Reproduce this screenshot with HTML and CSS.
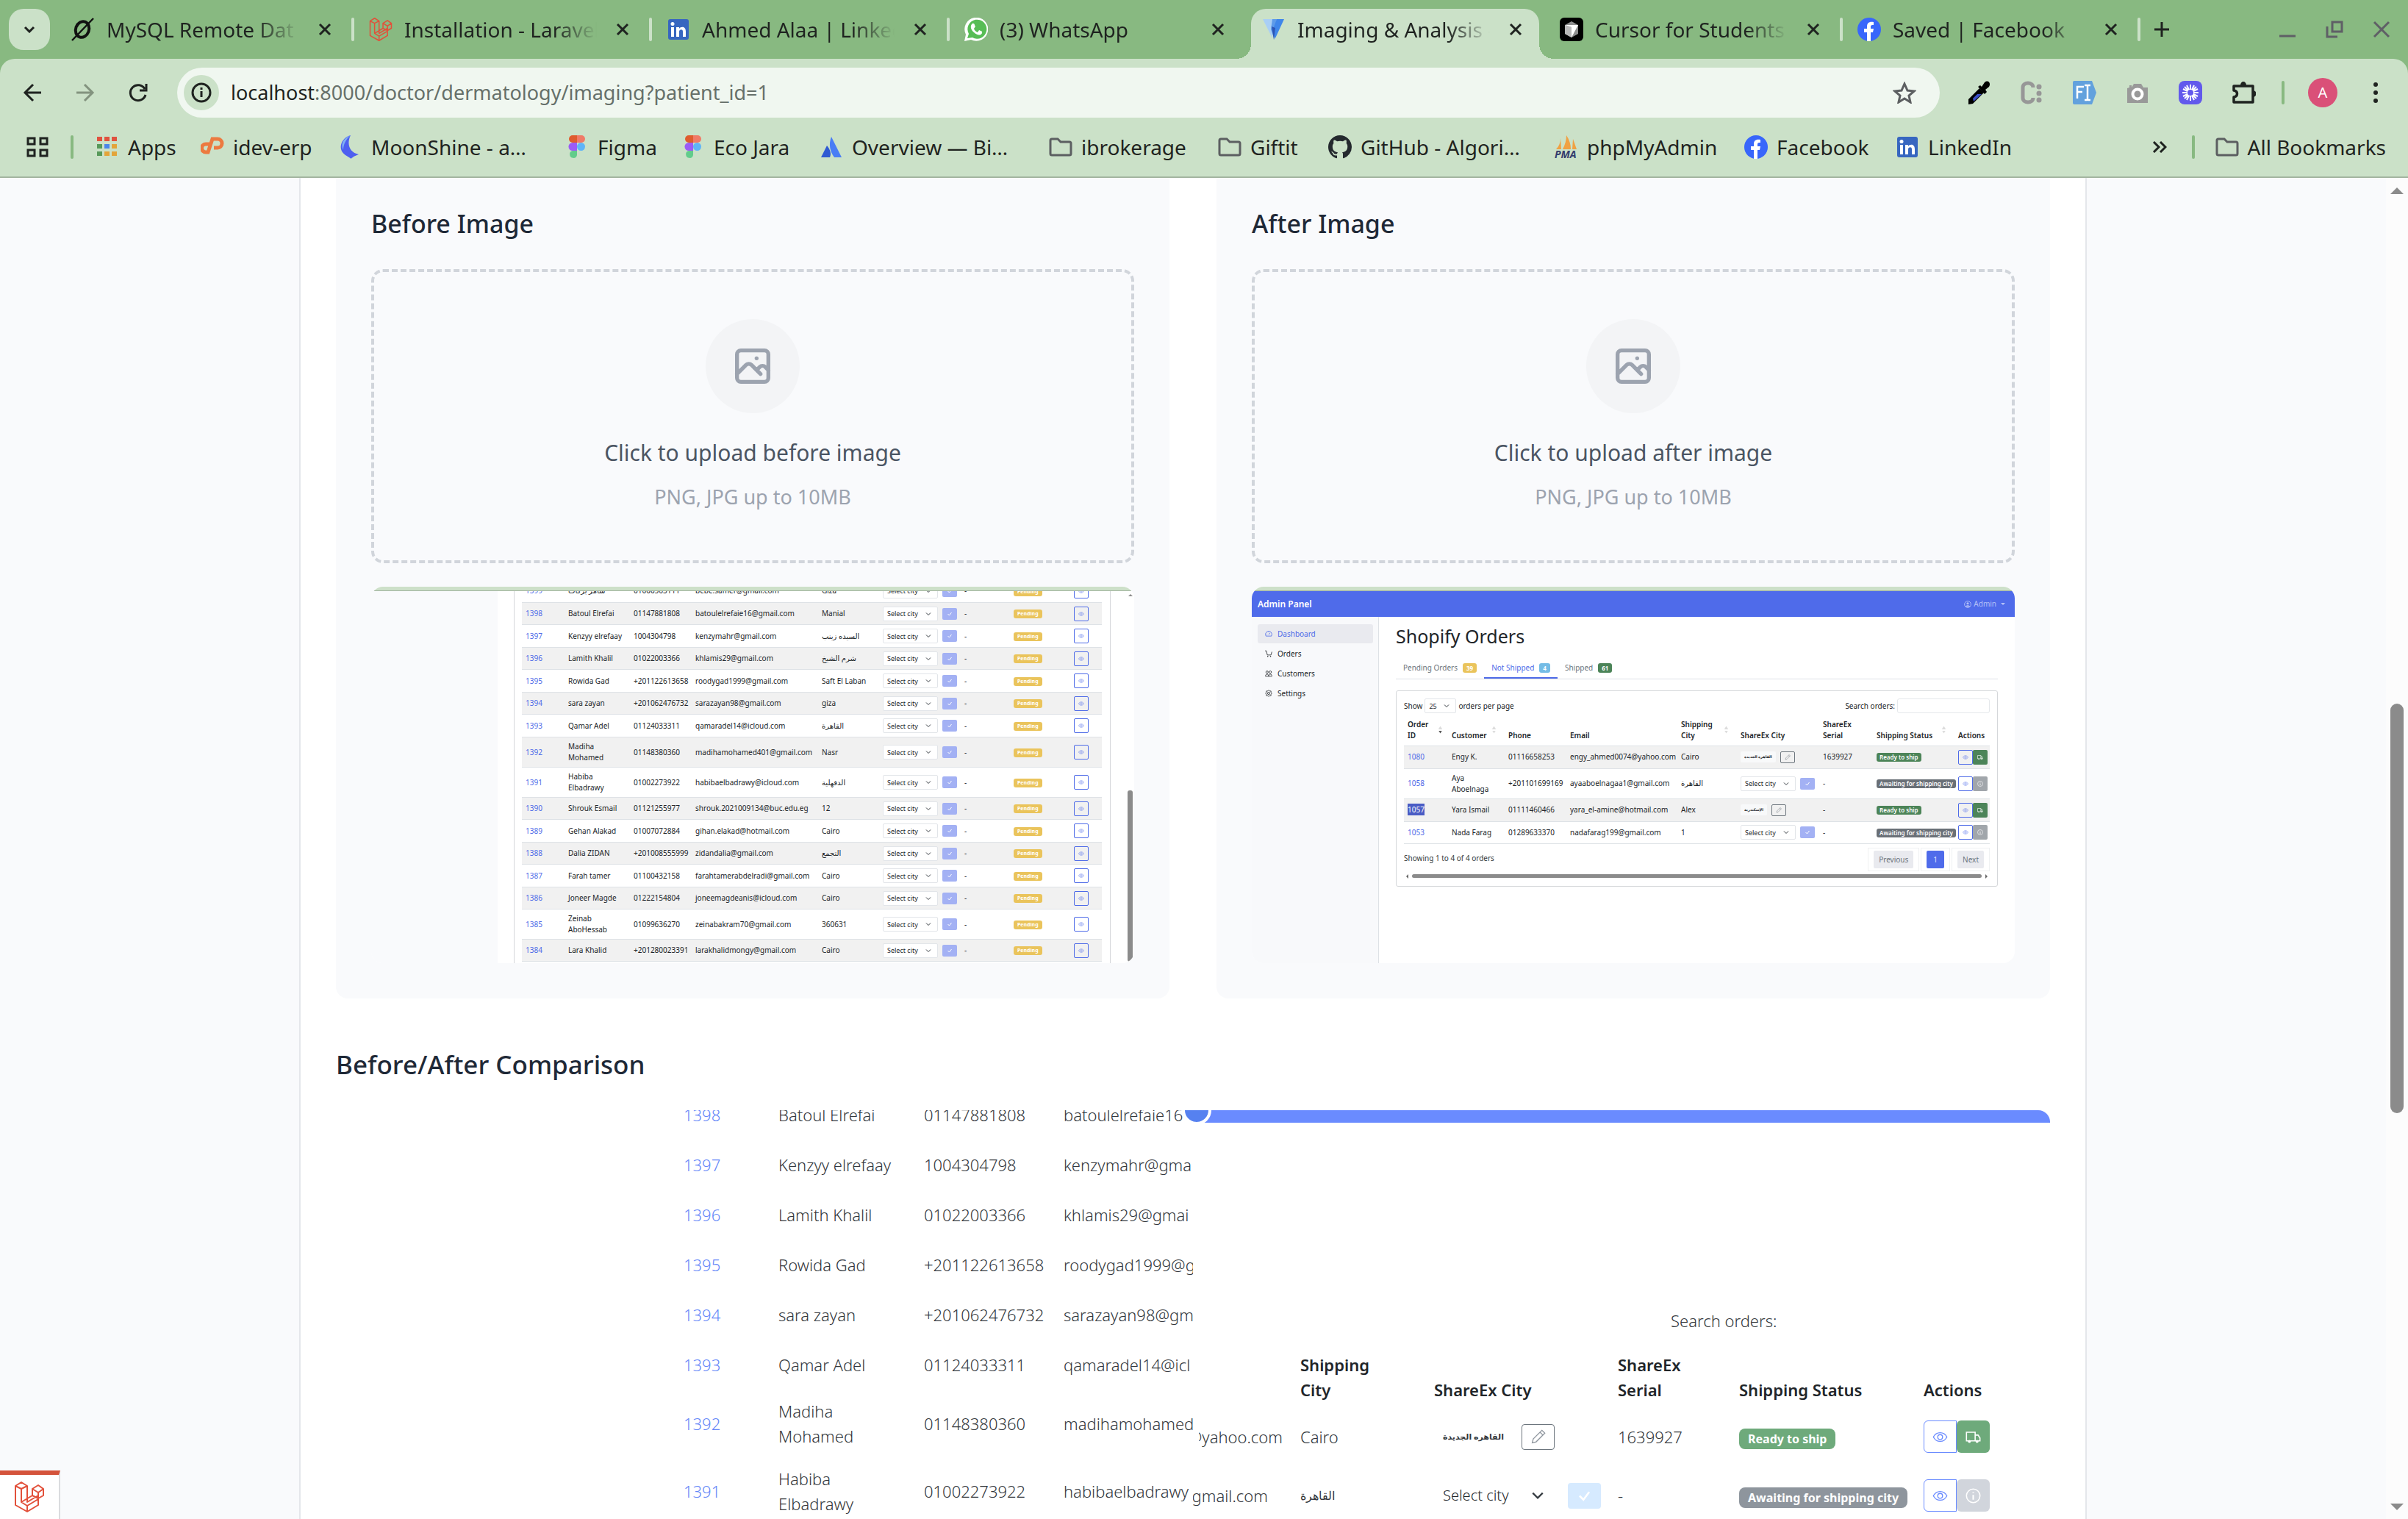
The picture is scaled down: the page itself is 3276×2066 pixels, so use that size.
FILE: index.html
```html
<!DOCTYPE html>
<html lang="en">
<head>
<meta charset="utf-8">
<title>Imaging &amp; Analysis</title>
<link rel="stylesheet" href="styles.css">
</head>
<body>
<svg class="sprite" aria-hidden="true">
  <symbol id="x" viewBox="0 0 18 18"><path d="M2 2l14 14M16 2L2 16" stroke="currentColor" stroke-width="3" fill="none"/></symbol>
  <symbol id="laravel" viewBox="0 0 40 42"><path d="M1 6l8-5 8 5v22l15-9v-4l-8-5V10l8-5 7 5v9l-7 4v9L17 41 1 32zM1 6l8 4 8-4M9 10v18l8 5 15-9M17 33v8M9 28l15-9v-9l8 5 7-5M32 15v8M24 19l8 4" fill="none" stroke="#e2503a" stroke-width="2" stroke-linejoin="round"/></symbol>
  <symbol id="in" viewBox="0 0 32 32"><rect x="2" y="2" width="28" height="28" rx="3" fill="#3766c0"/><path d="M6 13h4v13H6zM13 13h4v2c2-3 9-4 9 4v7h-4v-7c0-4-5-3-5 0v7h-4z" fill="#fff"/><circle cx="8" cy="8.500" r="2.500" fill="#fff"/></symbol>
  <symbol id="fb" viewBox="0 0 32 32"><circle cx="16" cy="16" r="16" fill="#3866fb"/><path d="M13 32V20H9v-5h4v-3c0-5 3-7 9-6v4c-3 0-4 0-4 3v2h4l-1 5h-3v12z" fill="#fff"/></symbol>
  <symbol id="folder" viewBox="0 0 32 26"><path d="M2 4a2 2 0 012-2h8l4 4h12a2 2 0 012 2v14a2 2 0 01-2 2H4a2 2 0 01-2-2z" fill="none" stroke="#5c5f61" stroke-width="3"/></symbol>
  <symbol id="figma" viewBox="0 0 32 32"><path d="M10 0h6v10h-6a5 5 0 010-10z" fill="#df5c2f"/><path d="M16 0h6a5 5 0 010 10h-6z" fill="#f07a67"/><path d="M10 10h6v11h-6a5 5 0 010-11z" fill="#9b5cf5"/><circle cx="21.500" cy="15.500" r="5.500" fill="#5fb4f8"/><path d="M10 21h6v6a5 5 0 11-6-6z" fill="#62cc8b"/></symbol>
  <symbol id="image" viewBox="0 0 24 24"><path fill="none" stroke="#9ca3af" stroke-width="2" stroke-linecap="round" stroke-linejoin="round" d="M4 16l4.586-4.586a2 2 0 012.828 0L16 16m-2-2l1.586-1.586a2 2 0 012.828 0L20 14m-6-6h.01M6 20h12a2 2 0 002-2V6a2 2 0 00-2-2H6a2 2 0 00-2 2v12a2 2 0 002 2z"/></symbol>
  <symbol id="eye" viewBox="0 0 16 16"><path d="M1 8c3-6 11-6 14 0-3 6-11 6-14 0z" fill="none" stroke="currentColor"/><circle cx="8" cy="8" r="2.500" fill="none" stroke="currentColor"/></symbol>
  <symbol id="tick" viewBox="0 0 16 16"><path d="M3 8l4 4 6-8" fill="none" stroke="currentColor" stroke-width="2"/></symbol>
  <symbol id="truck" viewBox="0 0 16 16"><path d="M1 3h9v9H1zM10 6h3l2 3v3h-5z" fill="none" stroke="currentColor" stroke-width="1.200"/><circle cx="4" cy="12.500" r="1.500" fill="currentColor"/><circle cx="12" cy="12.500" r="1.500" fill="currentColor"/></symbol>
  <symbol id="info" viewBox="0 0 16 16"><circle cx="8" cy="8" r="7" fill="none" stroke="currentColor" stroke-width="1.200"/><path d="M8 7v5M8 4v1" stroke="currentColor" stroke-width="1.600"/></symbol>
  <symbol id="pencil" viewBox="0 0 16 16"><path d="M2 14l1-4 9-9 3 3-9 9zM10 3l3 3" fill="none" stroke="currentColor"/></symbol>
</svg>

<header class="chrome">
  <div class="tabstrip">
    <button class="tab-search" aria-label="Search tabs"><svg width="16" height="10" viewBox="0 0 16 10"><path d="M2 2l6 6 6-6" fill="none" stroke="#1f2320" stroke-width="3"/></svg></button>
    <nav class="tabs">
      <div class="tab"><svg class="fav" viewBox="0 0 32 32"><ellipse cx="15" cy="16" rx="9" ry="11" fill="none" stroke="#111" stroke-width="4" transform="rotate(20 15 16)"/><path d="M30 1L1 31" stroke="#111" stroke-width="2.500"/></svg><span class="tab-title">MySQL Remote Dat</span><button class="close" aria-label="Close tab"><svg><use href="#x"/></svg></button></div>
      <div class="tab"><svg class="fav"><use href="#laravel"/></svg><span class="tab-title">Installation - Laravel</span><button class="close" aria-label="Close tab"><svg><use href="#x"/></svg></button></div>
      <div class="tab"><svg class="fav"><use href="#in"/></svg><span class="tab-title">Ahmed Alaa | Linked</span><button class="close" aria-label="Close tab"><svg><use href="#x"/></svg></button></div>
      <div class="tab last"><svg class="fav" viewBox="0 0 32 32"><path d="M0 32l2-9a16 16 0 117 7z" fill="#fff"/><path d="M4 28l2-6a13 13 0 115 5z" fill="#57bd55"/><path d="M11 8c3-1 3 3 4 4l-2 3c1 3 3 4 5 5l2-3c2 1 5 1 4 4-2 4-7 3-11-1-4-3-6-9-2-12z" fill="#fff"/></svg><span class="tab-title">(3) WhatsApp</span><button class="close" aria-label="Close tab"><svg><use href="#x"/></svg></button></div>
      <div class="tab active"><svg class="fav" viewBox="0 0 32 32"><path d="M1 2h14l-1 26z" fill="#a9cff5"/><path d="M14 2h6l-3 28-5-14z" fill="#5d9bea"/><path d="M20 2h10L18 28l-4-10z" fill="#3f86ea"/><path d="M13 12l5 2-2 16z" fill="#2c55b5"/></svg><span class="tab-title">Imaging &amp; Analysis -</span><button class="close" aria-label="Close tab"><svg><use href="#x"/></svg></button></div>
      <div class="tab"><svg class="fav" viewBox="0 0 32 32"><rect width="32" height="32" rx="6" fill="#000"/><path d="M16 5l9 5v12l-9 5-9-5V10z" fill="#8d8d8d"/><path d="M7 10h18l-9 17V13z" fill="#fff"/><path d="M7 10l9 3v14l-9-5z" fill="#b9b9b9"/></svg><span class="tab-title">Cursor for Students</span><button class="close" aria-label="Close tab"><svg><use href="#x"/></svg></button></div>
      <div class="tab"><svg class="fav"><use href="#fb"/></svg><span class="tab-title">Saved | Facebook</span><button class="close" aria-label="Close tab"><svg><use href="#x"/></svg></button></div>
      <button class="new-tab" aria-label="New tab"><svg width="22" height="22" viewBox="0 0 22 22"><path d="M11 1v20M1 11h20" stroke="#1f2320" stroke-width="3"/></svg></button>
    </nav>
    <div class="window-buttons">
      <button aria-label="Minimise"><svg width="24" height="24" viewBox="0 0 24 24"><path d="M1 21h22" stroke="#5f5f66" stroke-width="3"/></svg></button>
      <button aria-label="Restore"><svg width="24" height="24" viewBox="0 0 24 24"><path d="M9 2h13v13H9zM2 8v14h14" fill="none" stroke="#5f5f66" stroke-width="3"/></svg></button>
      <button aria-label="Close window"><svg width="24" height="24" viewBox="0 0 24 24"><path d="M2 2l20 20M22 2L2 22" stroke="#5f5f66" stroke-width="3"/></svg></button>
    </div>
  </div>

  <div class="toolbar">
    <button class="tool" aria-label="Back"><svg width="26" height="26" viewBox="0 0 26 26"><path d="M25 13H3M14 2L3 13l11 11" fill="none" stroke="#1f2320" stroke-width="3"/></svg></button>
    <button class="tool" aria-label="Forward"><svg width="26" height="26" viewBox="0 0 26 26"><path d="M1 13h22M12 2l11 11-11 11" fill="none" stroke="#83937f" stroke-width="3"/></svg></button>
    <button class="tool" aria-label="Reload"><svg width="26" height="26" viewBox="0 0 26 26"><path d="M23 16A10.500 10.500 0 1122 8M24 1v9h-9" fill="none" stroke="#1f2320" stroke-width="3"/></svg></button>
    <form class="omnibox">
      <button type="button" class="site-info" aria-label="Site information"><svg width="28" height="28" viewBox="0 0 28 28"><circle cx="14" cy="14" r="12" fill="none" stroke="#1f2320" stroke-width="3"/><path d="M14 12v8M14 7v3" stroke="#1f2320" stroke-width="3"/></svg></button>
      <a class="url" href="#"><b>localhost</b>:8000/doctor/dermatology/imaging?patient_id=1</a>
      <button type="button" class="star" aria-label="Bookmark this page"><svg width="32" height="30" viewBox="0 0 32 30"><path d="M16 3l4 9 9 1-7 6 2 9-8-5-8 5 2-9-7-6 9-1z" fill="none" stroke="#5c5f61" stroke-width="3"/></svg></button>
    </form>
    <div class="extensions">
      <button class="tool" aria-label="Colour picker"><svg width="32" height="32" viewBox="0 0 32 32"><path d="M2 32v-7L17 10l6 6L8 31z" fill="#000"/><path d="M8 24l6-6h6L9 28z" fill="#3c50c8"/><path d="M15 8l3-2 2 2 4-6c5-4 9 1 6 6l-5 4 2 3-3 3z" fill="#000"/></svg></button>
      <button class="tool" aria-label="Converter"><svg width="32" height="32" viewBox="0 0 32 32"><path d="M18 9c0-8-14-8-14 0v14c0 8 14 8 14 0" fill="none" stroke="#979797" stroke-width="5"/><circle cx="26" cy="8" r="3.500" fill="#979797"/><circle cx="26" cy="17" r="3.500" fill="#979797"/><circle cx="26" cy="26" r="3.500" fill="#979797"/></svg></button>
      <button class="tool" aria-label="Font inspector"><svg width="32" height="32" viewBox="0 0 32 32"><path d="M0 2a2 2 0 012-2h24l6 16-6 16H2a2 2 0 01-2-2z" fill="#62a1dd"/><path d="M6 24V8h9M6 15h7M16 6h3l1 1 1-1h3M20 7v18M16 26h3l1-1 1 1h3" fill="none" stroke="#fff" stroke-width="2.500"/></svg></button>
      <button class="tool" aria-label="Screen capture"><svg width="32" height="32" viewBox="0 0 32 32"><path d="M2 10l3-1V6h3v3l3-5h10l3 5h6v21H2z" fill="#999"/><circle cx="16" cy="18" r="6.500" fill="none" stroke="#fff" stroke-width="4"/></svg></button>
      <button class="tool" aria-label="Loom"><svg width="32" height="32" viewBox="0 0 32 32"><rect width="32" height="32" rx="8" fill="#6259ec"/><path d="M16 5v22M5 16h22M8 8l16 16M24 8L8 24M11 6l10 20M21 6L11 26M6 11l20 10M26 11L6 21" stroke="#fff" stroke-width="2"/><circle cx="16" cy="16" r="4" fill="#6259ec"/></svg></button>
      <button class="tool" aria-label="Extensions"><svg width="34" height="34" viewBox="0 0 34 34"><path d="M4 8h26v22H4v-7c6-1 6-8 0-9z" fill="none" stroke="#1f2320" stroke-width="3.500" stroke-linejoin="round"/><path d="M13 7a4 5 0 018 0zM30 14a4 4 0 010 9z" fill="#1f2320"/></svg></button>
    </div>
    <span class="rule"></span>
    <button class="tool avatar-btn" aria-label="Profile"><span class="avatar">A</span></button>
    <button class="tool" aria-label="Menu"><svg width="8" height="28" viewBox="0 0 8 28"><circle cx="4" cy="3" r="3" fill="#1f2320"/><circle cx="4" cy="14" r="3" fill="#1f2320"/><circle cx="4" cy="25" r="3" fill="#1f2320"/></svg></button>
  </div>

  <nav class="bookmarks">
    <button class="grid-btn" aria-label="Tab groups"><svg width="30" height="28" viewBox="0 0 30 28"><path d="M2 2h9v8H2zM19 2h9v8h-9zM2 18h9v8H2zM19 18h9v8h-9z" fill="none" stroke="#1f2320" stroke-width="3"/></svg></button>
    <span class="rule"></span>
    <div class="links">
      <a href="#"><svg viewBox="0 0 32 32"><path d="M2 2h7v6H2zM12 2h7v6h-7zM22 2h7v6h-7z" fill="#e0523f"/><path d="M2 12h7v6H2zM2 22h7v6H2z" fill="#57995a"/><path d="M12 12h7v6h-7z" fill="#4a86ea"/><path d="M22 12h7v6h-7zM12 22h7v6h-7zM22 22h7v6h-7z" fill="#e3a43a"/></svg>Apps</a>
      <a href="#"><svg viewBox="0 0 32 32"><path d="M13 12H7a5 5 0 000 11h3l6-18h7a5 5 0 010 12h-5" fill="none" stroke="#ec7a40" stroke-width="5"/></svg>idev-erp</a>
      <a href="#"><svg viewBox="0 0 32 32"><path d="M16 0C2 4-2 20 9 27l8 5c0-2 2-1 3-3l7-3C15 24 10 12 16 0z" fill="#4e5ff0"/><path d="M16 0C6 4 2 12 6 20 6 12 10 5 16 0z" fill="#7fb0f5"/></svg>MoonShine - a…</a>
      <a href="#"><svg><use href="#figma"/></svg>Figma</a>
      <a href="#"><svg><use href="#figma"/></svg>Eco Jara</a>
      <a href="#"><svg viewBox="0 0 32 32"><path d="M16 2l14 28H20C14 22 12 12 16 2z" fill="#4a7df5"/><path d="M10 14c5 6 6 11 4 16H2z" fill="#2f5ad2"/></svg>Overview — Bi…</a>
      <a href="#"><svg><use href="#folder"/></svg>ibrokerage</a>
      <a href="#"><svg><use href="#folder"/></svg>Giftit</a>
      <a href="#"><svg viewBox="0 0 16 16"><path fill="#24292e" d="M8 0C3.580 0 0 3.580 0 8c0 3.540 2.290 6.530 5.470 7.590.4.070.55-.17.55-.38 0-.19-.01-.82-.01-1.490-2.010.37-2.530-.49-2.690-.94-.09-.23-.48-.94-.82-1.130-.28-.15-.68-.52-.01-.53.63-.01 1.080.58 1.230.82.72 1.210 1.870.87 2.330.66.07-.52.28-.87.51-1.070-1.780-.2-3.640-.89-3.640-3.950 0-.87.31-1.590.82-2.150-.08-.2-.36-1.020.08-2.120 0 0 .67-.21 2.200.82a7.600 7.600 0 014 0c1.530-1.040 2.200-.82 2.200-.82.44 1.100.16 1.920.08 2.120.51.56.82 1.270.82 2.150 0 3.070-1.870 3.750-3.650 3.950.29.25.54.73.54 1.480 0 1.070-.01 1.930-.01 2.200 0 .21.15.46.55.38A8.010 8.010 0 0016 8c0-4.420-3.580-8-8-8z"/></svg>GitHub - Algori…</a>
      <a href="#"><svg viewBox="0 0 32 32"><path d="M2 19c4-4 6-9 6-15l1 15zM11 19c3-6 5-12 5-19 4 6 6 12 6 19zM24 19l1-14 5 14z" fill="#f0a143"/><text x="0" y="31" class="pma">PMA</text></svg>phpMyAdmin</a>
      <a href="#"><svg><use href="#fb"/></svg>Facebook</a>
      <a href="#"><svg><use href="#in"/></svg>LinkedIn</a>
    </div>
    <button class="more" aria-label="More bookmarks"><svg width="20" height="16" viewBox="0 0 20 16"><path d="M2 1l7 7-7 7M11 1l7 7-7 7" fill="none" stroke="#1f2320" stroke-width="3"/></svg></button>
    <span class="rule"></span>
    <a class="all" href="#"><svg><use href="#folder"/></svg>All Bookmarks</a>
  </nav>
</header>

<div class="viewport">
  <main class="page">
    <div class="sheet">
      <div class="panels">
        <section class="panel">
          <h2>Before Image</h2>
          <button class="dropzone">
            <span class="disc"><svg><use href="#image"/></svg></span>
            <span class="drop-title">Click to upload before image</span>
            <span class="drop-hint">PNG, JPG up to 10MB</span>
          </button>
          <div class="preview">
            <div class="strip strip-before"></div>
            <div class="before">
              <div class="before-side"></div>
              <div class="before-card">
                <table class="orders">
                  <colgroup><col class="c58"><col class="c89"><col class="c84"><col class="c172"><col class="c83"><col class="c111"><col class="c67"><col class="c82"><col></colgroup>
                  <tbody>
                  <tr><td><a href="#">1399</a></td><td>سامر بركات</td><td>01000563111</td><td>bebe.samer@gmail.com</td><td>Giza</td><td><div class="pick"><select aria-label="City"><option>Select city</option></select><button class="ok" aria-label="Save"><svg><use href="#tick"/></svg></button></div></td><td>-</td><td><span class="badge amber">Pending</span></td><td><button class="view" aria-label="View"><svg><use href="#eye"/></svg></button></td></tr>
                  <tr><td><a href="#">1398</a></td><td>Batoul Elrefai</td><td>01147881808</td><td>batoulelrefaie16@gmail.com</td><td>Manial</td><td><div class="pick"><select aria-label="City"><option>Select city</option></select><button class="ok" aria-label="Save"><svg><use href="#tick"/></svg></button></div></td><td>-</td><td><span class="badge amber">Pending</span></td><td><button class="view" aria-label="View"><svg><use href="#eye"/></svg></button></td></tr>
                  <tr><td><a href="#">1397</a></td><td>Kenzyy elrefaay</td><td>1004304798</td><td>kenzymahr@gmail.com</td><td>السيده زينب</td><td><div class="pick"><select aria-label="City"><option>Select city</option></select><button class="ok" aria-label="Save"><svg><use href="#tick"/></svg></button></div></td><td>-</td><td><span class="badge amber">Pending</span></td><td><button class="view" aria-label="View"><svg><use href="#eye"/></svg></button></td></tr>
                  <tr><td><a href="#">1396</a></td><td>Lamith Khalil</td><td>01022003366</td><td>khlamis29@gmail.com</td><td>شرم الشيخ</td><td><div class="pick"><select aria-label="City"><option>Select city</option></select><button class="ok" aria-label="Save"><svg><use href="#tick"/></svg></button></div></td><td>-</td><td><span class="badge amber">Pending</span></td><td><button class="view" aria-label="View"><svg><use href="#eye"/></svg></button></td></tr>
                  <tr><td><a href="#">1395</a></td><td>Rowida Gad</td><td>+201122613658</td><td>roodygad1999@gmail.com</td><td>Saft El Laban</td><td><div class="pick"><select aria-label="City"><option>Select city</option></select><button class="ok" aria-label="Save"><svg><use href="#tick"/></svg></button></div></td><td>-</td><td><span class="badge amber">Pending</span></td><td><button class="view" aria-label="View"><svg><use href="#eye"/></svg></button></td></tr>
                  <tr><td><a href="#">1394</a></td><td>sara zayan</td><td>+201062476732</td><td>sarazayan98@gmail.com</td><td>giza</td><td><div class="pick"><select aria-label="City"><option>Select city</option></select><button class="ok" aria-label="Save"><svg><use href="#tick"/></svg></button></div></td><td>-</td><td><span class="badge amber">Pending</span></td><td><button class="view" aria-label="View"><svg><use href="#eye"/></svg></button></td></tr>
                  <tr><td><a href="#">1393</a></td><td>Qamar Adel</td><td>01124033311</td><td>qamaradel14@icloud.com</td><td>القاهرة</td><td><div class="pick"><select aria-label="City"><option>Select city</option></select><button class="ok" aria-label="Save"><svg><use href="#tick"/></svg></button></div></td><td>-</td><td><span class="badge amber">Pending</span></td><td><button class="view" aria-label="View"><svg><use href="#eye"/></svg></button></td></tr>
                  <tr class="tall"><td><a href="#">1392</a></td><td>Madiha<br>Mohamed</td><td>01148380360</td><td>madihamohamed401@gmail.com</td><td>Nasr</td><td><div class="pick"><select aria-label="City"><option>Select city</option></select><button class="ok" aria-label="Save"><svg><use href="#tick"/></svg></button></div></td><td>-</td><td><span class="badge amber">Pending</span></td><td><button class="view" aria-label="View"><svg><use href="#eye"/></svg></button></td></tr>
                  <tr class="tall"><td><a href="#">1391</a></td><td>Habiba<br>Elbadrawy</td><td>01002273922</td><td>habibaelbadrawy@icloud.com</td><td>الدقهلية</td><td><div class="pick"><select aria-label="City"><option>Select city</option></select><button class="ok" aria-label="Save"><svg><use href="#tick"/></svg></button></div></td><td>-</td><td><span class="badge amber">Pending</span></td><td><button class="view" aria-label="View"><svg><use href="#eye"/></svg></button></td></tr>
                  <tr><td><a href="#">1390</a></td><td>Shrouk Esmail</td><td>01121255977</td><td>shrouk.2021009134@buc.edu.eg</td><td>12</td><td><div class="pick"><select aria-label="City"><option>Select city</option></select><button class="ok" aria-label="Save"><svg><use href="#tick"/></svg></button></div></td><td>-</td><td><span class="badge amber">Pending</span></td><td><button class="view" aria-label="View"><svg><use href="#eye"/></svg></button></td></tr>
                  <tr><td><a href="#">1389</a></td><td>Gehan Alakad</td><td>01007072884</td><td>gihan.elakad@hotmail.com</td><td>Cairo</td><td><div class="pick"><select aria-label="City"><option>Select city</option></select><button class="ok" aria-label="Save"><svg><use href="#tick"/></svg></button></div></td><td>-</td><td><span class="badge amber">Pending</span></td><td><button class="view" aria-label="View"><svg><use href="#eye"/></svg></button></td></tr>
                  <tr><td><a href="#">1388</a></td><td>Dalia ZIDAN</td><td>+201008555999</td><td>zidandalia@gmail.com</td><td>التجمع</td><td><div class="pick"><select aria-label="City"><option>Select city</option></select><button class="ok" aria-label="Save"><svg><use href="#tick"/></svg></button></div></td><td>-</td><td><span class="badge amber">Pending</span></td><td><button class="view" aria-label="View"><svg><use href="#eye"/></svg></button></td></tr>
                  <tr><td><a href="#">1387</a></td><td>Farah tamer</td><td>01100432158</td><td>farahtamerabdelradi@gmail.com</td><td>Cairo</td><td><div class="pick"><select aria-label="City"><option>Select city</option></select><button class="ok" aria-label="Save"><svg><use href="#tick"/></svg></button></div></td><td>-</td><td><span class="badge amber">Pending</span></td><td><button class="view" aria-label="View"><svg><use href="#eye"/></svg></button></td></tr>
                  <tr><td><a href="#">1386</a></td><td>Joneer Magde</td><td>01222154804</td><td>joneemagdeanis@icloud.com</td><td>Cairo</td><td><div class="pick"><select aria-label="City"><option>Select city</option></select><button class="ok" aria-label="Save"><svg><use href="#tick"/></svg></button></div></td><td>-</td><td><span class="badge amber">Pending</span></td><td><button class="view" aria-label="View"><svg><use href="#eye"/></svg></button></td></tr>
                  <tr class="tall"><td><a href="#">1385</a></td><td>Zeinab<br>AboHessab</td><td>01099636270</td><td>zeinabakram70@gmail.com</td><td>360631</td><td><div class="pick"><select aria-label="City"><option>Select city</option></select><button class="ok" aria-label="Save"><svg><use href="#tick"/></svg></button></div></td><td>-</td><td><span class="badge amber">Pending</span></td><td><button class="view" aria-label="View"><svg><use href="#eye"/></svg></button></td></tr>
                  <tr><td><a href="#">1384</a></td><td>Lara Khalid</td><td>+201280023391</td><td>larakhalidmongy@gmail.com</td><td>Cairo</td><td><div class="pick"><select aria-label="City"><option>Select city</option></select><button class="ok" aria-label="Save"><svg><use href="#tick"/></svg></button></div></td><td>-</td><td><span class="badge amber">Pending</span></td><td><button class="view" aria-label="View"><svg><use href="#eye"/></svg></button></td></tr>
                  </tbody>
                </table>
              </div>
              <div class="before-scroll"><i class="mini-up"></i><i class="mini-thumb"></i></div>
            </div>
          </div>
        </section>

        <section class="panel">
          <h2>After Image</h2>
          <button class="dropzone">
            <span class="disc"><svg><use href="#image"/></svg></span>
            <span class="drop-title">Click to upload after image</span>
            <span class="drop-hint">PNG, JPG up to 10MB</span>
          </button>
          <div class="preview">
            <div class="strip"></div>
            <div class="admin-bar"><strong>Admin Panel</strong><span class="admin-user"><svg width="10" height="10" viewBox="0 0 16 16"><circle cx="8" cy="8" r="7" fill="none" stroke="currentColor" stroke-width="1.500"/><circle cx="8" cy="6" r="2.500" fill="currentColor"/><path d="M3 13c2-4 8-4 10 0z" fill="currentColor"/></svg>Admin<i class="caret"></i></span></div>
            <div class="admin">
              <nav class="admin-side">
                <a class="on" href="#"><svg viewBox="0 0 16 16"><path d="M2 13a7 7 0 1112 0zM8 10l3-4M4 9h1M8 4v1" fill="none" stroke="currentColor" stroke-width="1.300"/></svg>Dashboard</a>
                <a href="#"><svg viewBox="0 0 16 16"><path d="M0 2h3l2 9h8l2-7" fill="none" stroke="currentColor" stroke-width="1.300"/><circle cx="6" cy="14" r="1.300" fill="currentColor"/><circle cx="12" cy="14" r="1.300" fill="currentColor"/></svg>Orders</a>
                <a href="#"><svg viewBox="0 0 16 16"><path d="M1 14c0-6 7-6 7 0zM8 14c0-6 7-6 7 0z" fill="none" stroke="currentColor" stroke-width="1.300"/><circle cx="4.500" cy="5" r="2.500" fill="none" stroke="currentColor" stroke-width="1.300"/><circle cx="11.500" cy="5" r="2.500" fill="none" stroke="currentColor" stroke-width="1.300"/></svg>Customers</a>
                <a href="#"><svg viewBox="0 0 16 16"><path d="M8 1l2 2 3 0 0 3 2 2-2 2 0 3-3 0-2 2-2-2-3 0 0-3-2-2 2-2 0-3 3 0z" fill="none" stroke="currentColor" stroke-width="1.300"/><circle cx="8" cy="8" r="2.500" fill="none" stroke="currentColor" stroke-width="1.300"/></svg>Settings</a>
              </nav>
              <div class="admin-main">
                <h3>Shopify Orders</h3>
                <div class="pills"><a href="#">Pending Orders<span class="count amber">39</span></a><a class="on" href="#">Not Shipped<span class="count sky">4</span></a><a href="#">Shipped<span class="count green">61</span></a></div>
                <div class="admin-card">
                  <div class="filters"><label>Show <select class="len"><option>25</option></select> orders per page</label><label>Search orders: <input type="search"></label></div>
                  <table class="orders ship">
                    <colgroup><col class="c60"><col class="c77"><col class="c84"><col class="c151"><col class="c81"><col class="c112"><col class="c73"><col class="c111"><col></colgroup>
                    <thead><tr><th>Order<br>ID<i class="sort desc"></i></th><th>Customer<i class="sort"></i></th><th>Phone</th><th>Email</th><th>Shipping<br>City<i class="sort"></i></th><th>ShareEx City</th><th>ShareEx<br>Serial</th><th>Shipping Status<i class="sort"></i></th><th>Actions</th></tr></thead>
                    <tbody>
                    <tr><td><a href="#">1080</a></td><td>Engy K.</td><td>01116658253</td><td>engy_ahmed0074@yahoo.com</td><td>Cairo</td><td><div class="pick"><span class="chip">القاهره الجديدة</span><button class="edit" aria-label="Edit"><svg><use href="#pencil"/></svg></button></div></td><td>1639927</td><td><span class="badge green">Ready to ship</span></td><td><div class="duo"><button class="view" aria-label="View"><svg><use href="#eye"/></svg></button><button class="go" aria-label="Ship"><svg><use href="#truck"/></svg></button></div></td></tr>
                    <tr class="tall"><td><a href="#">1058</a></td><td>Aya<br>Aboelnaga</td><td>+201101699169</td><td>ayaaboelnagaa1@gmail.com</td><td>القاهرة</td><td><div class="pick"><select aria-label="City"><option>Select city</option></select><button class="ok" aria-label="Save"><svg><use href="#tick"/></svg></button></div></td><td>-</td><td><span class="badge slate">Awaiting for shipping city</span></td><td><div class="duo"><button class="view" aria-label="View"><svg><use href="#eye"/></svg></button><button class="go off" aria-label="Info"><svg><use href="#info"/></svg></button></div></td></tr>
                    <tr><td><a class="marked" href="#">1057</a></td><td>Yara Ismail</td><td>01111460466</td><td>yara_el-amine@hotmail.com</td><td>Alex</td><td><div class="pick"><span class="chip">الإسكندرية</span><button class="edit" aria-label="Edit"><svg><use href="#pencil"/></svg></button></div></td><td>-</td><td><span class="badge green">Ready to ship</span></td><td><div class="duo"><button class="view" aria-label="View"><svg><use href="#eye"/></svg></button><button class="go" aria-label="Ship"><svg><use href="#truck"/></svg></button></div></td></tr>
                    <tr><td><a href="#">1053</a></td><td>Nada Farag</td><td>01289633370</td><td>nadafarag199@gmail.com</td><td>1</td><td><div class="pick"><select aria-label="City"><option>Select city</option></select><button class="ok" aria-label="Save"><svg><use href="#tick"/></svg></button></div></td><td>-</td><td><span class="badge slate">Awaiting for shipping city</span></td><td><div class="duo"><button class="view" aria-label="View"><svg><use href="#eye"/></svg></button><button class="go off" aria-label="Info"><svg><use href="#info"/></svg></button></div></td></tr>
                    </tbody>
                  </table>
                  <div class="pager"><span>Showing 1 to 4 of 4 orders</span><span class="pages"><span><button>Previous</button></span><span><button class="cur">1</button></span><span><button>Next</button></span></span></div>
                  <div class="hscroll"><i class="mini-left"></i><i class="hthumb"></i><i class="mini-right"></i></div>
                </div>
              </div>
            </div>
          </div>
        </section>
      </div>

      <h2 class="cmp-title">Before/After Comparison</h2>
      <section class="compare">
        <div class="cmp-before">
          <table class="big">
            <colgroup><col class="b129"><col class="b198"><col class="b190"><col></colgroup>
            <tbody>
            <tr><td><a href="#">1398</a></td><td>Batoul Elrefai</td><td>01147881808</td><td>batoulelrefaie16</td></tr>
            <tr><td><a href="#">1397</a></td><td>Kenzyy elrefaay</td><td>1004304798</td><td>kenzymahr@gma</td></tr>
            <tr><td><a href="#">1396</a></td><td>Lamith Khalil</td><td>01022003366</td><td>khlamis29@gmai</td></tr>
            <tr><td><a href="#">1395</a></td><td>Rowida Gad</td><td>+201122613658</td><td>roodygad1999@g</td></tr>
            <tr><td><a href="#">1394</a></td><td>sara zayan</td><td>+201062476732</td><td>sarazayan98@gm</td></tr>
            <tr><td><a href="#">1393</a></td><td>Qamar Adel</td><td>01124033311</td><td>qamaradel14@icl</td></tr>
            <tr class="tall"><td><a href="#">1392</a></td><td>Madiha<br>Mohamed</td><td>01148380360</td><td>madihamohamed</td></tr>
            <tr class="tall"><td><a href="#">1391</a></td><td>Habiba<br>Elbadrawy</td><td>01002273922</td><td>habibaelbadrawy</td></tr>
            </tbody>
          </table>
        </div>
        <div class="cmp-after">
          <div class="cmp-search">Search orders:</div>
          <table class="big">
            <colgroup><col class="b146"><col class="b182"><col class="b250"><col class="b165"><col class="b251"><col></colgroup>
            <thead><tr><th></th><th>Shipping<br>City</th><th>ShareEx City</th><th>ShareEx<br>Serial</th><th>Shipping Status</th><th>Actions</th></tr></thead>
            <tbody>
            <tr><td><div class="cut cut-a">@yahoo.com</div></td><td>Cairo</td><td><div class="pick"><span class="chip">القاهره الجديدة</span><button class="edit" aria-label="Edit"><svg><use href="#pencil"/></svg></button></div></td><td>1639927</td><td><span class="badge green">Ready to ship</span></td><td><div class="duo"><button class="view" aria-label="View"><svg><use href="#eye"/></svg></button><button class="go" aria-label="Ship"><svg><use href="#truck"/></svg></button></div></td></tr>
            <tr class="tall"><td><div class="cut cut-b">gmail.com</div></td><td class="ar">القاهرة</td><td><div class="pick"><select aria-label="City"><option>Select city</option></select><button class="ok" aria-label="Save"><svg><use href="#tick"/></svg></button></div></td><td>-</td><td><span class="badge slate">Awaiting for shipping city</span></td><td><div class="duo"><button class="view" aria-label="View"><svg><use href="#eye"/></svg></button><button class="go off" aria-label="Info"><svg><use href="#info"/></svg></button></div></td></tr>
            </tbody>
          </table>
        </div>
        <div class="slider"><span class="track"></span><input type="range" min="0" max="1000" value="502" aria-label="Comparison position"></div>
      </section>
    </div>
  </main>
  <div class="scrollbar"><span class="arrow"><i class="up"></i></span><span class="gap-top"></span><span class="thumb"></span><span class="gap-bottom"></span><span class="arrow"><i class="down"></i></span></div>
  <button class="debugbar" aria-label="Open debug bar"><svg width="40" height="42"><use href="#laravel"/></svg></button>
</div>
</body>
</html>
```

FILE: styles.css
```css
* { box-sizing: border-box; }
html, body { height: 100%; margin: 0; }
body {
  display: flex;
  flex-direction: column;
  overflow: hidden;
  font-family: "Noto Sans", "DejaVu Sans", sans-serif;
  color: #1f2937;
  background: #f9fafc;
}
button, input, select { font: inherit; color: inherit; margin: 0; padding: 0; border: 0; background: none; }
a { color: inherit; text-decoration: none; }
svg { display: block; flex: none; }
.sprite { position: absolute; width: 0; height: 0; }

/* Browser window */
.chrome { flex: none; background: #88b981; border-bottom: 2px solid #a3b5a0; color: #1f2320; font-size: 28px; line-height: 40px; }
.tabstrip { display: flex; align-items: center; height: 80px; }
.tab-search { display: grid; place-items: center; flex: none; width: 56px; height: 56px; margin: 0 11px 0 12px; border-radius: 20px; background: #cbe1c8; }
.tabs { display: flex; align-items: flex-end; flex: 1; height: 80px; min-width: 0; }
.tab { position: relative; display: flex; align-items: center; flex: 0 1 405px; min-width: 0; height: 68px; padding: 0 33px 12px 18px; }
.tab::after { content: ""; position: absolute; right: 2px; top: 12px; width: 4px; height: 32px; border-radius: 2px; background: #cbe1c8; }
.tab.last::after { display: none; }
.tab.active::before { content: ""; position: absolute; inset: 0 10px 0 3px; border-radius: 20px 20px 0 0; background: #cbe1c8; }
.tab.active::after {
  top: auto; bottom: 0; left: -17px; right: -10px; width: auto; height: 20px; border-radius: 0;
  background:
    radial-gradient(circle at 0 0, transparent 20px, #cbe1c8 20px) left / 20px 20px no-repeat,
    radial-gradient(circle at 100% 0, transparent 20px, #cbe1c8 20px) right / 20px 20px no-repeat;
}
.tab > * { position: relative; z-index: 1; }
.fav { width: 32px; height: 32px; margin-right: 16px; }
.tab-title { flex: 1; min-width: 0; margin-right: 26px; overflow: hidden; white-space: nowrap; -webkit-mask-image: linear-gradient(90deg, #000 78%, transparent); mask-image: linear-gradient(90deg, #000 78%, transparent); }
.close svg { width: 18px; height: 18px; }
.new-tab { height: 80px; padding: 0 16px; }
.window-buttons { display: flex; gap: 40px; margin-right: 24px; }

.toolbar { display: flex; align-items: center; height: 92px; padding: 0 8px; border-radius: 20px 20px 0 0; background: #cbe1c8; }
.tool { display: grid; place-items: center; flex: none; width: 72px; height: 72px; }
.omnibox { display: flex; align-items: center; flex: 1; height: 68px; margin: 0 17px 0 17px; padding: 0 32px 0 9px; border-radius: 34px; background: #f0f7f0; }
.site-info { display: grid; place-items: center; width: 48px; height: 48px; border-radius: 24px; background: #cbe1c8; }
.url { flex: 1; margin-left: 16px; font-size: 27px; color: #66706a; }
.url b { font-weight: 400; color: #1f2320; }
.extensions { display: flex; }
.rule { flex: none; width: 4px; height: 32px; border-radius: 2px; background: #88b981; }
.toolbar > .rule { margin: 0 16px; }
.avatar { display: grid; place-items: center; width: 40px; height: 40px; border-radius: 20px; background: #da5078; color: #fff; font-size: 20px; }

.bookmarks { display: flex; align-items: center; height: 68px; padding: 0 30px 12px 36px; background: #cbe1c8; }
.bookmarks .grid-btn { margin-right: 30px; }
.links { display: grid; grid-template-columns: 143px 188px 308px 158px 188px 312px 230px 150px 308px 258px 206px auto; flex: 1; margin-left: 30px; }
.links a, .all { display: flex; align-items: center; gap: 12px; white-space: nowrap; }
.links svg, .all svg { width: 32px; height: 32px; }
.pma { font: italic 700 14px "Noto Sans", sans-serif; fill: #343c6c; }
.more { margin-right: 34px; }
.all { margin-left: 28px; }

/* Page viewport */
.viewport { position: relative; display: flex; flex: 1; min-height: 0; }
.page { flex: 1; min-width: 0; overflow: hidden; padding: 0 407px; }
.sheet { min-height: 100%; padding: 0 48px; border: solid #e5e7eb; border-width: 0 2px; background: #fff; }
.panels { display: grid; grid-template-columns: 1fr 1fr; gap: 64px; }
.panel { min-width: 0; padding: 36px 48px 48px; border-radius: 0 0 16px 16px; background: #f9fafc; }
h2 { margin: 0; font-size: 34px; font-weight: 500; line-height: 52px; color: #1f2937; }
.panel h2 { margin-bottom: 36px; }
.dropzone { display: flex; flex-direction: column; align-items: center; width: 100%; padding: 64px 64px 68px; border: 4px dashed #d1d5db; border-radius: 16px; }
.disc { display: grid; place-items: center; width: 128px; height: 128px; margin-bottom: 32px; border-radius: 64px; background: #f3f4f6; }
.disc svg { width: 64px; height: 64px; }
.drop-title { font-size: 30px; line-height: 44px; color: #4b5563; }
.drop-hint { margin-top: 20px; font-size: 27px; line-height: 36px; color: #9ca3af; }

/* Uploaded screenshots */
.preview { display: flex; flex-direction: column; height: 512px; margin-top: 32px; overflow: hidden; border-radius: 16px; background: #fff; font-size: 10px; line-height: 15px; color: #212529; }
.strip { flex: none; height: 6px; background: #cde0c9; border-bottom: 1px solid #a3b5a0; }
.strip-before { margin-right: 4px; border-radius: 0 12px 0 0; }
.before { display: grid; grid-template-columns: 172px 1fr 32px; flex: 1; min-height: 0; }
.before-side { background: #f9fafc; }
.before-card { display: flex; flex-direction: column; justify-content: flex-end; min-width: 0; min-height: 0; margin-left: 22px; padding: 0 11px 2px 10px; overflow: hidden; border: solid #d5d7da; border-width: 0 1px; }
.before-scroll { display: flex; flex-direction: column; align-items: flex-end; padding: 4px 2px 2px 0; }
.mini-up { border: solid transparent; border-width: 0 3px 3px; border-bottom-color: #8b8b8b; }
.mini-thumb { width: 7px; height: 233px; margin-top: auto; border-radius: 3px; background: #8b8b8b; }

.orders { width: 100%; border-collapse: collapse; table-layout: fixed; }
.orders td, .orders th { padding: 0 0 0 5px; text-align: left; white-space: nowrap; }
.orders tbody tr { height: 30px; border-bottom: 1px solid #dee2e6; }
.orders tbody tr:nth-child(odd) { height: 31px; }
.orders tbody tr.tall { height: 41px; }
.orders tbody tr:nth-child(even), .ship tbody tr:nth-child(odd) { background: #f1f1f1; }
.ship tbody tr:nth-child(even) { background: #fff; }
.orders td a { color: #4e6be8; }
.orders td a.marked { padding: 1px 0; background: #4a5cc4; color: #fff; }
.c58 { width: 58px; } .c60 { width: 60px; } .c67 { width: 67px; } .c73 { width: 73px; } .c77 { width: 77px; }
.c81 { width: 81px; } .c82 { width: 82px; } .c83 { width: 83px; } .c84 { width: 84px; } .c89 { width: 89px; }
.c111 { width: 111px; } .c112 { width: 112px; } .c151 { width: 151px; } .c172 { width: 172px; }

.pick { display: flex; align-items: center; gap: 6px; }
select {
  appearance: none; width: 75px; height: 20px; padding: 0 5px; border: 1px solid #e2e5e9; border-radius: 2px; font-size: 9px; color: #212529;
  background: #fff url("data:image/svg+xml,%3Csvg xmlns='http://www.w3.org/2000/svg' viewBox='0 0 16 16'%3E%3Cpath d='M2 5l6 6 6-6' fill='none' stroke='%23343a40' stroke-width='2'/%3E%3C/svg%3E") no-repeat right 8px center / 8px 8px;
}
.ok, .view, .go, .edit { display: grid; place-items: center; flex: none; width: 20px; height: 20px; border-radius: 2px; }
.ok { height: 16px; background: #a3b1f4; color: #fff; }
.ok svg, .view svg, .go svg, .edit svg { width: 8px; height: 8px; }
.view { border: 1px solid #4e6be8; color: #4e6be8; }
.edit { height: 16px; border: 1px solid #6c757d; color: #6c757d; }
.go { background: #4c8458; color: #fff; }
.go.off { background: #a1a6ab; }
.duo { display: flex; }
.badge { display: inline-block; padding: 0 5px; border-radius: 3px; font-size: 7px; font-weight: 700; line-height: 12px; color: #fff; vertical-align: middle; }
.ship .badge { font-size: 8px; font-weight: 600; padding: 0 4px; }
.amber { background: #eac45c; } .green { background: #4c8458; } .slate { background: #6a7077; } .sky { background: #74bce6; }
.chip { padding: 0 5px; border-radius: 2px; font-size: 5px; font-weight: 700; background: #f8f9fa; }

.admin-bar { display: flex; align-items: center; justify-content: space-between; flex: none; height: 35px; padding: 0 13px 0 8px; background: #4f6bea; color: #fff; }
.admin-bar strong { font-size: 12px; font-weight: 600; }
.admin-user { display: flex; align-items: center; gap: 3px; color: #b3c0f7; }
.caret { margin-left: 3px; border: solid transparent; border-width: 3px 3px 0; border-top-color: currentColor; }
.admin { display: grid; grid-template-columns: 173px 1fr; flex: 1; min-height: 0; }
.admin-side { padding: 10px 7px 0 8px; border-right: 1px solid #dee2e6; background: #f8f9fb; }
.admin-side a { display: flex; align-items: center; gap: 7px; height: 26px; margin-bottom: 1px; padding-left: 10px; border-radius: 3px; }
.admin-side svg { width: 10px; height: 10px; }
.admin-side .on { background: #e9eaef; color: #4e6be8; }
.admin-main { min-width: 0; padding: 10px 23px 0; }
h3 { margin: 0; font-size: 25px; font-weight: 400; line-height: 32px; }
.pills { display: flex; height: 28px; margin-top: 15px; border-bottom: 1px solid #dee2e6; color: #6c757d; }
.pills a { display: flex; align-items: center; gap: 7px; padding: 0 10px; border-bottom: 2px solid transparent; }
.pills .on { border-color: #4e6be8; color: #4e6be8; }
.count { padding: 0 5px; border-radius: 3px; font-size: 8px; font-weight: 700; line-height: 13px; color: #fff; }
.admin-card { margin-top: 15px; padding: 10px; border: 1px solid #d5d7da; border-radius: 3px; }
.filters { display: flex; justify-content: space-between; height: 20px; }
.filters label { display: flex; align-items: center; gap: 3px; }
.filters .len { width: 43px; }
.filters input { width: 126px; height: 20px; border: 1px solid #e5e8eb; border-radius: 3px; background: #fff; }
.ship thead tr { height: 44px; border-bottom: 1px solid #dee2e6; }
.ship th { position: relative; padding-bottom: 6px; vertical-align: bottom; font-size: 10px; font-weight: 600; }
.sort { position: absolute; right: 12px; bottom: 16px; width: 5px; height: 10px; background: linear-gradient(#dcdcdc 4px, transparent 4px, transparent 6px, #dcdcdc 6px); clip-path: polygon(50% 0, 100% 40%, 100% 60%, 50% 100%, 0 60%, 0 40%); }
.sort.desc { background: linear-gradient(#dcdcdc 4px, transparent 4px, transparent 6px, #555 6px); right: 8px; }
.pager { display: flex; justify-content: space-between; padding-top: 5px; line-height: 28px; color: #343a40; }
.pages { display: flex; gap: 2px; }
.pages > span { padding: 3px 7px; border: 1px solid #eff1f2; }
.pages button { display: block; height: 24px; padding: 0 7px; border-radius: 2px; line-height: 24px; background: #e9eaef; color: #6c757d; }
.pages .cur { padding: 0 9px; background: #4f6bea; color: #dfe5ff; }
.hscroll { display: flex; align-items: center; gap: 5px; height: 6px; margin-top: 4px; padding: 0 3px; }
.hthumb { flex: 1; height: 5px; border-radius: 3px; background: #8b8b8b; }
.mini-left { border: solid transparent; border-width: 3px 3px 3px 0; border-right-color: #666; }
.mini-right { border: solid transparent; border-width: 3px 0 3px 3px; border-left-color: #666; }

/* Comparison */
.cmp-title { margin-top: 64px; font-size: 35px; }
.compare { position: relative; display: grid; grid-template-columns: 1fr 1fr; margin-top: 36px; overflow: hidden; border-radius: 16px 16px 0 0; font-size: 22px; line-height: 34px; color: #33373c; }
.cmp-before { min-width: 0; padding-left: 473px; overflow: hidden; }
.cmp-before .big { margin-top: -28px; }
.big { width: 100%; border-collapse: collapse; table-layout: fixed; font-weight: 300; }
.big td, .big th { padding: 0; text-align: left; white-space: nowrap; }
.big tbody tr { height: 68px; }
.big tbody tr.tall { height: 92px; }
.big .ar { font-size: 16px; }
.big a { color: #6487f8; }
.b129 { width: 129px; } .b146 { width: 146px; } .b165 { width: 165px; } .b182 { width: 182px; }
.b190 { width: 190px; } .b198 { width: 198px; } .b250 { width: 250px; } .b251 { width: 251px; }
.cmp-after { min-width: 0; padding-top: 269px; }
.cmp-search { padding-left: 650px; font-weight: 300; }
.cmp-after thead tr { height: 107px; }
.cmp-after th { padding-bottom: 13px; vertical-align: bottom; font-weight: 600; color: #212529; }
.cut { display: flex; justify-content: flex-end; overflow: hidden; }
.cut-a { width: 114px; margin-left: 8px; }
.cut-b { width: 102px; }
.big .chip { padding: 0 12px; font-size: 11px; background: none; }
.big .pick { gap: 12px; }
.big .view, .big .go { width: 45px; height: 44px; border-radius: 6px; }
.big .view { border-color: #6a8bff; border-radius: 6px 0 0 6px; color: #6a8bff; }
.big .ok, .big .edit { width: 45px; height: 35px; border-radius: 4px; }
.big .edit { color: #8e959d; }
.big .ok { background: #d6eaff; }
.big svg { width: 21px; height: 21px; }
.big .go { background: #6eaa7b; }
.big .go.off { background: #d1d5dc; }
.big select { width: 170px; height: 44px; padding: 0 12px; border: 0; font-size: 20px; font-weight: 300; background-position: right 20px center; background-size: 18px 18px; }
.big .badge { padding: 0 12px; border-radius: 8px; font-size: 16px; line-height: 28px; }
.big .badge.green { background: #6eaa7b; }
.big .badge.slate { background: #8e959d; }
.slider { position: absolute; top: 0; left: 0; right: 0; height: 17px; overflow: hidden; }
.track { position: absolute; top: 0; bottom: 0; left: 50%; right: 0; margin-left: 8px; background: #6a8bff; }
.slider input { position: absolute; top: -20px; left: 0; width: 100%; height: 40px; appearance: none; }
.slider input::-webkit-slider-thumb { appearance: none; width: 40px; height: 40px; border: 4px solid #fff; border-radius: 50%; background: #5681f0; }

/* Viewport scrollbar */
.scrollbar { display: flex; flex-direction: column; align-items: center; flex: none; width: 30px; background: #fcfcfc; }
.arrow { display: grid; place-items: center; height: 34px; }
.arrow i { border: solid transparent; }
.arrow .up { border-width: 0 9px 9px; border-bottom-color: #8b8b8b; }
.arrow .down { border-width: 9px 9px 0; border-top-color: #8b8b8b; }
.gap-top { flex: 681; }
.thumb { flex: 557; width: 18px; border-radius: 9px; background: #8b8b8b; }
.gap-bottom { flex: 518; }

.debugbar { position: absolute; left: 0; bottom: 0; display: grid; place-items: center; width: 82px; height: 66px; border-top: 6px solid #d4533b; border-right: 2px solid #dadcdf; background: #fff; }
```
